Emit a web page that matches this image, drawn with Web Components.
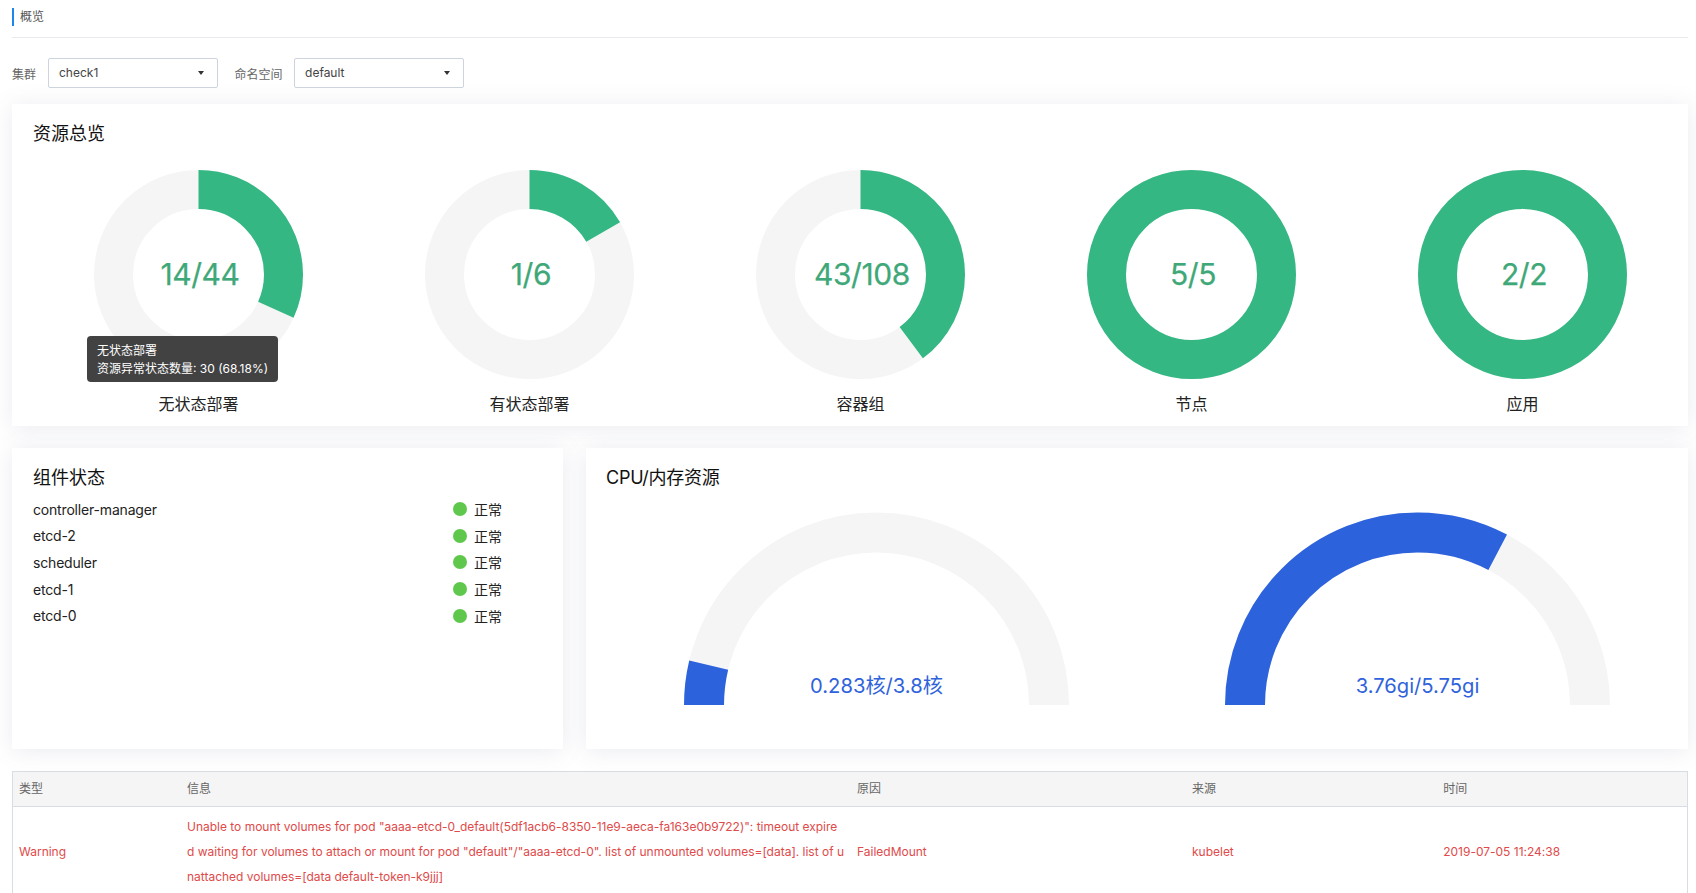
<!DOCTYPE html>
<html lang="zh"><head><meta charset="utf-8"><title>概览</title>
<style>
html,body{margin:0;height:893px;overflow:hidden;background:#fff}
body{font-family:Inter,"Noto Sans CJK SC",sans-serif;color:#333}
</style></head><body>
<overview-page></overview-page>
<script>
class Base extends HTMLElement{
  render(html){ if(!this.shadowRoot) this.attachShadow({mode:'open'}); this.shadowRoot.innerHTML=html; }
}
customElements.define('page-title',class extends Base{connectedCallback(){this.render(`<style>
:host{display:block;height:37px;border-bottom:1px solid #e8eaee}
.t{display:flex;align-items:center;height:18px;position:relative;top:8px;border-left:2px solid #1c86ee;padding-left:6px;font-size:12px;color:#555;line-height:18px}
</style><div class="t"><slot></slot></div>`)}});
customElements.define('select-box',class extends Base{connectedCallback(){this.render(`<style>
:host{display:flex;align-items:center;gap:var(--label-gap,12px);font-size:12px;color:#666}
.b{width:170px;height:30px;box-sizing:border-box;border:1px solid #cdd4dd;border-radius:2px;display:flex;align-items:center;justify-content:space-between;padding:0 13px 0 10px;color:#444;background:#fff}
.b span{margin-bottom:2px}
.a{width:0;height:0;border:3px solid transparent;border-top:4px solid #333;border-bottom:0}
</style><span>${this.getAttribute('label')}</span><div class="b"><span>${this.getAttribute('value')}</span><i class="a"></i></div>`)}});
customElements.define('panel-card',class extends Base{connectedCallback(){this.render(`<style>
:host{display:block;background:#fff;box-shadow:0 2px 22px rgba(90,100,140,.13);box-sizing:border-box;padding:18px 0 0 21px}
h2{margin:0;font-size:18px;line-height:24px;font-weight:400;color:#111;letter-spacing:var(--heading-spacing,0)}
</style><h2>${this.getAttribute('heading')}</h2><slot></slot>`)}});
customElements.define('donut-chart',class extends Base{connectedCallback(){
  const p=+this.getAttribute('pct'),tip=this.getAttribute('tip');
  this.render(`<style>
:host{display:flex;flex-direction:column;align-items:center;position:relative}
.s{display:grid;width:209px;height:209px;place-items:center}
.s>*{grid-area:1/1}
svg{display:block}
.v{font-size:30px;letter-spacing:-.4px;-webkit-text-stroke:.25px #3fa878;color:#3fa878;transform:translate(1.5px,-1px)}
.l{margin-top:12.5px;font-size:16px;line-height:24px;color:#222}
.tip{position:absolute;left:54px;top:166px;width:191px;height:46px;box-sizing:border-box;padding:6px 10px;border-radius:4px;background:rgba(50,50,50,.92);color:#fff;font-size:12px;line-height:18px;white-space:nowrap}
</style><div class="s"><svg width="209" height="209" viewBox="0 0 209 209"><circle cx="104.5" cy="104.5" r="85" fill="none" stroke="#f5f5f5" stroke-width="39"/><circle cx="104.5" cy="104.5" r="85" fill="none" stroke="#34b783" stroke-width="39" pathLength="100" stroke-dasharray="${p} 100" transform="rotate(-90 104.5 104.5)"/></svg><span class="v">${this.getAttribute('value')}</span></div><div class="l">${this.getAttribute('label')}</div>${tip?`<div class="tip">${tip}</div>`:''}`)}});
customElements.define('status-row',class extends Base{connectedCallback(){this.render(`<style>
:host{display:grid;grid-template-columns:413px 14px auto;column-gap:7px;align-items:center;height:26.6px;font-size:14px;color:#222}
.n{letter-spacing:-.18px}
.d{width:14px;height:14px;border-radius:50%;background:#5fc84c}
</style><span class="n">${this.getAttribute('name')}</span><i class="d"></i><span>正常</span>`)}});
customElements.define('gauge-chart',class extends Base{connectedCallback(){
  const p=+this.getAttribute('pct');
  this.render(`<style>
:host{display:grid;justify-items:center}
.s{display:grid;width:385px;height:193px}
.s>*{grid-area:1/1}
svg{display:block}
.v{align-self:end;justify-self:center;font-size:20.2px;line-height:24px;margin-bottom:7px;color:#2f63dc}
</style><div class="s"><svg width="385" height="193" viewBox="0 0 385 193"><path d="M20 193A172.5 172.5 0 0 1 365 193" fill="none" stroke="#f5f5f5" stroke-width="40"/><path d="M20 193A172.5 172.5 0 0 1 365 193" fill="none" stroke="#2d62dd" stroke-width="40" pathLength="100" stroke-dasharray="${p} 100"/></svg><span class="v">${this.getAttribute('value')}</span></div>`)}});
customElements.define('event-table',class extends Base{connectedCallback(){this.render(`<style>
:host{display:block;font-size:12px;letter-spacing:-.01px}
table{width:100%;table-layout:fixed;border-collapse:collapse;border:1px solid #d8dce3}
th{height:35px;box-sizing:border-box;padding:0 4px 3px 7px;background:#f5f5f5;border-bottom:1px solid #d8dce3;font-weight:400;color:#666;text-align:left}
td{padding:6.5px 4px 9.5px 7px;line-height:25px;color:#e04a4a;vertical-align:middle;white-space:nowrap}
th:first-child,td:first-child{padding-left:6px}
</style><table><colgroup><col style="width:10%"><col style="width:40%"><col style="width:20%"><col style="width:15%"><col style="width:15%"></colgroup>
<thead><tr><th>类型</th><th>信息</th><th>原因</th><th>来源</th><th>时间</th></tr></thead>
<tbody><tr><td>Warning</td><td>Unable to mount volumes for pod "aaaa-etcd-0_default(5df1acb6-8350-11e9-aeca-fa163e0b9722)": timeout expire<br>d waiting for volumes to attach or mount for pod "default"/"aaaa-etcd-0". list of unmounted volumes=[data]. list of u<br>nattached volumes=[data default-token-k9jjj]</td><td>FailedMount</td><td>kubelet</td><td>2019-07-05 11:24:38</td></tr></tbody></table>`)}});
customElements.define('overview-page',class extends Base{connectedCallback(){this.render(`<style>
:host{display:block;padding:0 8px 0 12px}
.f{display:flex;gap:16.5px;margin-top:20px}
.f select-box+select-box{--label-gap:11.5px}
.top{display:block;height:321.5px;margin-top:16px}
.donuts{display:grid;grid-template-columns:repeat(5,331px);margin-top:24px}
.row{display:grid;grid-template-columns:551px 1fr;gap:23px;margin-top:22px}
.row panel-card{height:301px}
.cpu{padding-left:20px;--heading-spacing:-.25px}
.list{margin-top:6.5px}
.g{display:grid;grid-template-columns:repeat(2,541px);margin-top:22.5px}
event-table{margin-top:22.5px}
</style>
<page-title>概览</page-title>
<div class="f"><select-box label="集群" value="check1"></select-box><select-box label="命名空间" value="default"></select-box></div>
<panel-card class="top" heading="资源总览"><div class="donuts">
<donut-chart pct="31.82" value="14/44" label="无状态部署" tip="无状态部署<br>资源异常状态数量: 30 (68.18%)"></donut-chart>
<donut-chart pct="16.67" value="1/6" label="有状态部署"></donut-chart>
<donut-chart pct="39.81" value="43/108" label="容器组"></donut-chart>
<donut-chart pct="100" value="5/5" label="节点"></donut-chart>
<donut-chart pct="100" value="2/2" label="应用"></donut-chart>
</div></panel-card>
<div class="row">
<panel-card heading="组件状态"><div class="list">
<status-row name="controller-manager"></status-row><status-row name="etcd-2"></status-row><status-row name="scheduler"></status-row><status-row name="etcd-1"></status-row><status-row name="etcd-0"></status-row>
</div></panel-card>
<panel-card class="cpu" heading="CPU/内存资源"><div class="g">
<gauge-chart pct="7.45" value="0.283核/3.8核"></gauge-chart><gauge-chart pct="65.39" value="3.76gi/5.75gi"></gauge-chart>
</div></panel-card>
</div>
<event-table></event-table>`)}});
</script></body></html>
